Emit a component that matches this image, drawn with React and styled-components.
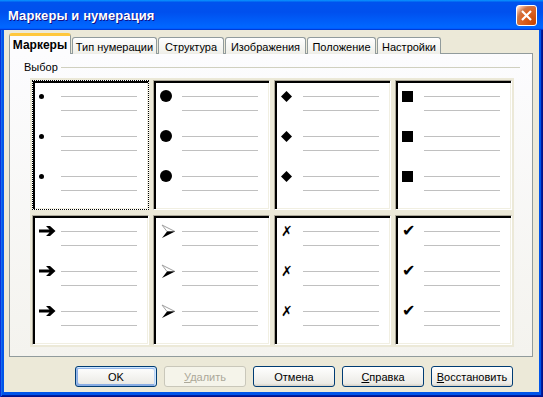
import styled, { createGlobalStyle } from "styled-components";

const GlobalStyle = createGlobalStyle`
    html, body {
        margin: 0;
        padding: 0;
        background: #0a246a;
    }
    * {
        box-sizing: border-box;
    }
`;

const Window = styled.div`
    width: 543px;
    height: 397px;
    display: flex;
    flex-direction: column;
    font-family: "Liberation Sans", Arial, sans-serif;
    font-size: 11px;
    color: #000;
    overflow: hidden;
`;

const TitleBar = styled.div`
    height: 30px;
    flex-shrink: 0;
    display: flex;
    align-items: center;
    justify-content: space-between;
    padding: 0 6px 0 8px;
    background: linear-gradient(180deg, #0997ff, #0053ee 8%, #0050ee 40%, #06f 88%, #06f 93%, #005bff 95%, #003dd7 96%, #003dd7);
`;

const Title = styled.span`
    color: #fff;
    font-weight: bold;
    font-size: 13px;
    letter-spacing: 0.1px;
    text-shadow: 1px 1px #0f1089;
`;

const CloseButton = styled.div`
    width: 21px;
    height: 21px;
    border: 1px solid #fff;
    border-radius: 3px;
    display: flex;
    align-items: center;
    justify-content: center;
    background: radial-gradient(circle at 90% 90%, #cc4600 0, #dc6527 55%, #cd7546 70%, #ffccb2 90%, #fff 100%);
`;

const Frame = styled.div`
    flex: 1;
    display: flex;
    padding: 0 4px 5px 4px;
    background: #0055ea;
    box-shadow: inset 1px 0 #0831d9, inset -1px -1px #00138c, inset 2px 0 #166aee, inset -2px -2px #001ea0;
`;

const Client = styled.div`
    flex: 1;
    display: flex;
    flex-direction: column;
    padding: 3px 6px 0 5px;
    background: #ece9d8;
`;

const TabList = styled.div`
    display: flex;
    align-items: flex-end;
    gap: 1px;
    height: 21px;
    margin-bottom: -1px;
    position: relative;
    z-index: 1;
`;

const Tab = styled.div`
    width: ${(p) => p.$w}px;
    height: ${(p) => (p.$active ? 21 : 17)}px;
    display: flex;
    align-items: center;
    justify-content: center;
    border: 1px solid #919b9c;
    border-bottom: none;
    border-radius: 3px 3px 0 0;
    font-weight: ${(p) => (p.$active ? "bold" : "normal")};
    font-size: ${(p) => (p.$active ? 12 : 11)}px;
    background: ${(p) =>
        p.$active
            ? "#fcfcfe"
            : "linear-gradient(180deg, #fff, #fafaf9 26%, #f0f0ea 95%, #ecebe5)"};
    border-top: ${(p) => (p.$active ? "3px solid #ffc73c" : "1px solid #919b9c")};
    padding-top: ${(p) => (p.$active ? 0 : 1)}px;
`;

const Panel = styled.div`
    height: 304px;
    border: 1px solid #919b9c;
    background: linear-gradient(180deg, #fcfcfe, #f4f3ee);
    padding: 6px 0 0 14px;
`;

const GroupHeader = styled.div`
    display: flex;
    align-items: center;
    gap: 3px;
    height: 14px;
    width: 496px;
`;

const GroupRule = styled.div`
    flex: 1;
    height: 1px;
    background: #d0d0bf;
`;

const Grid = styled.div`
    margin: 4px 0 0 6px;
    width: 484px;
    padding: 2px;
    display: grid;
    grid-template-columns: repeat(4, 117px);
    grid-template-rows: repeat(2, 130px);
    column-gap: 4px;
    row-gap: 5px;
    background: #ece9d8;
`;

const Cell = styled.div`
    background: #fff;
    border: 1px solid;
    border-color: #aca899 #fff #fff #aca899;
    border-style: ${(p) => (p.$selected ? "dotted" : "solid")};
    ${(p) => p.$selected && "border-color: #000;"}
    box-shadow: inset 2px 2px #000, inset -1px -1px #f1efe2;
    padding: 8px 0 0 6px;
    display: flex;
    flex-direction: column;
`;

const Row = styled.div`
    height: 42px;
    display: flex;
    align-items: flex-start;
`;

const MarkerSlot = styled.div`
    width: 22px;
    height: 14px;
    display: flex;
    align-items: center;
    font-family: "DejaVu Sans", sans-serif;
    font-size: ${(p) => p.$size || 12}px;
    line-height: 1;
`;

const Lines = styled.div`
    width: 76px;
    padding-top: 7px;
    display: flex;
    flex-direction: column;
    gap: 13px;
`;

const Line = styled.div`
    height: 1px;
    background: #c0c0c0;
`;

const ButtonRow = styled.div`
    display: flex;
    justify-content: flex-end;
    gap: 7px;
    margin-top: 9px;
    padding-right: 20px;
`;

const Button = styled.div`
    width: 82px;
    height: 21px;
    display: flex;
    align-items: center;
    justify-content: center;
    border: 1px solid ${(p) => (p.$disabled ? "#c9c7ba" : "#003c74")};
    border-radius: 3px;
    color: ${(p) => (p.$disabled ? "#aca899" : "#000")};
    background: ${(p) =>
        p.$disabled ? "#f5f4ea" : "linear-gradient(180deg, #fff, #ecebe6 86%, #d6d0c5)"};
    box-shadow: ${(p) =>
        p.$default
            ? "inset -1px 1px #cee7ff, inset 1px 2px #98b8ea, inset -2px 2px #bcd4f6, inset 1px -1px #89ade4, inset 2px -2px #89ade4"
            : "none"};
    u {
        text-decoration: underline;
    }
`;

const Dot = ({ d }) => (
    <svg width={d} height={d}>
        <circle cx={d / 2} cy={d / 2} r={d / 2} fill="#000" />
    </svg>
);

const Diamond = () => (
    <svg width="11" height="11">
        <path d="M5.5 0 L11 5.5 L5.5 11 L0 5.5 Z" fill="#000" />
    </svg>
);

const Square = () => (
    <svg width="11" height="11">
        <rect x="0" y="0" width="11" height="11" fill="#000" />
    </svg>
);

const Arrow = () => (
    <svg width="18" height="12">
        <path d="M0 4.5 L10.5 4.5 L7 1 L11 1 L16.5 6 L11 11 L7 11 L10.5 7.5 L0 7.5 Z" fill="#000" />
    </svg>
);

const Arrowhead = () => (
    <svg width="15" height="15" style={{ marginLeft: 1 }}>
        <path d="M1 1 L14 7.5 L6 7.5 Z" fill="#fff" stroke="#a0a0a0" strokeWidth="1" />
        <path d="M6 7.5 L14 7.5 L1 14 Z" fill="#000" />
    </svg>
);

const markers = [
    { el: <Dot d={5} /> },
    { el: <Dot d={12} /> },
    { el: <Diamond /> },
    { el: <Square /> },
    { el: <Arrow /> },
    { el: <Arrowhead /> },
    { el: "✗", size: 14 },
    { el: "✔", size: 16 },
];

const tabs = [
    { label: "Маркеры", w: 62, active: true },
    { label: "Тип нумерации", w: 85 },
    { label: "Структура", w: 66 },
    { label: "Изображения", w: 81 },
    { label: "Положение", w: 69 },
    { label: "Настройки", w: 64 },
];

function BulletCell({ marker, selected }) {
    return (
        <Cell $selected={selected}>
            {[0, 1, 2].map((i) => (
                <Row key={i}>
                    <MarkerSlot $size={marker.size}>{marker.el}</MarkerSlot>
                    <Lines>
                        <Line />
                        <Line />
                    </Lines>
                </Row>
            ))}
        </Cell>
    );
}

export default function App() {
    return (
        <>
            <GlobalStyle />
            <Window>
                <TitleBar>
                    <Title>Маркеры и нумерация</Title>
                    <CloseButton>
                        <svg width="11" height="11">
                            <path d="M1 1 L10 10 M10 1 L1 10" stroke="#fff" strokeWidth="2.2" />
                        </svg>
                    </CloseButton>
                </TitleBar>
                <Frame>
                    <Client>
                        <TabList>
                            {tabs.map((t) => (
                                <Tab key={t.label} $w={t.w} $active={t.active}>
                                    {t.label}
                                </Tab>
                            ))}
                        </TabList>
                        <Panel>
                            <GroupHeader>
                                <span>Выбор</span>
                                <GroupRule />
                            </GroupHeader>
                            <Grid>
                                {markers.map((m, i) => (
                                    <BulletCell key={i} marker={m} selected={i === 0} />
                                ))}
                            </Grid>
                        </Panel>
                        <ButtonRow>
                            <Button $default>OK</Button>
                            <Button $disabled>
                                <span><u>У</u>далить</span>
                            </Button>
                            <Button>Отмена</Button>
                            <Button>
                                <span><u>С</u>правка</span>
                            </Button>
                            <Button>
                                <span><u>В</u>осстановить</span>
                            </Button>
                        </ButtonRow>
                    </Client>
                </Frame>
            </Window>
        </>
    );
}
